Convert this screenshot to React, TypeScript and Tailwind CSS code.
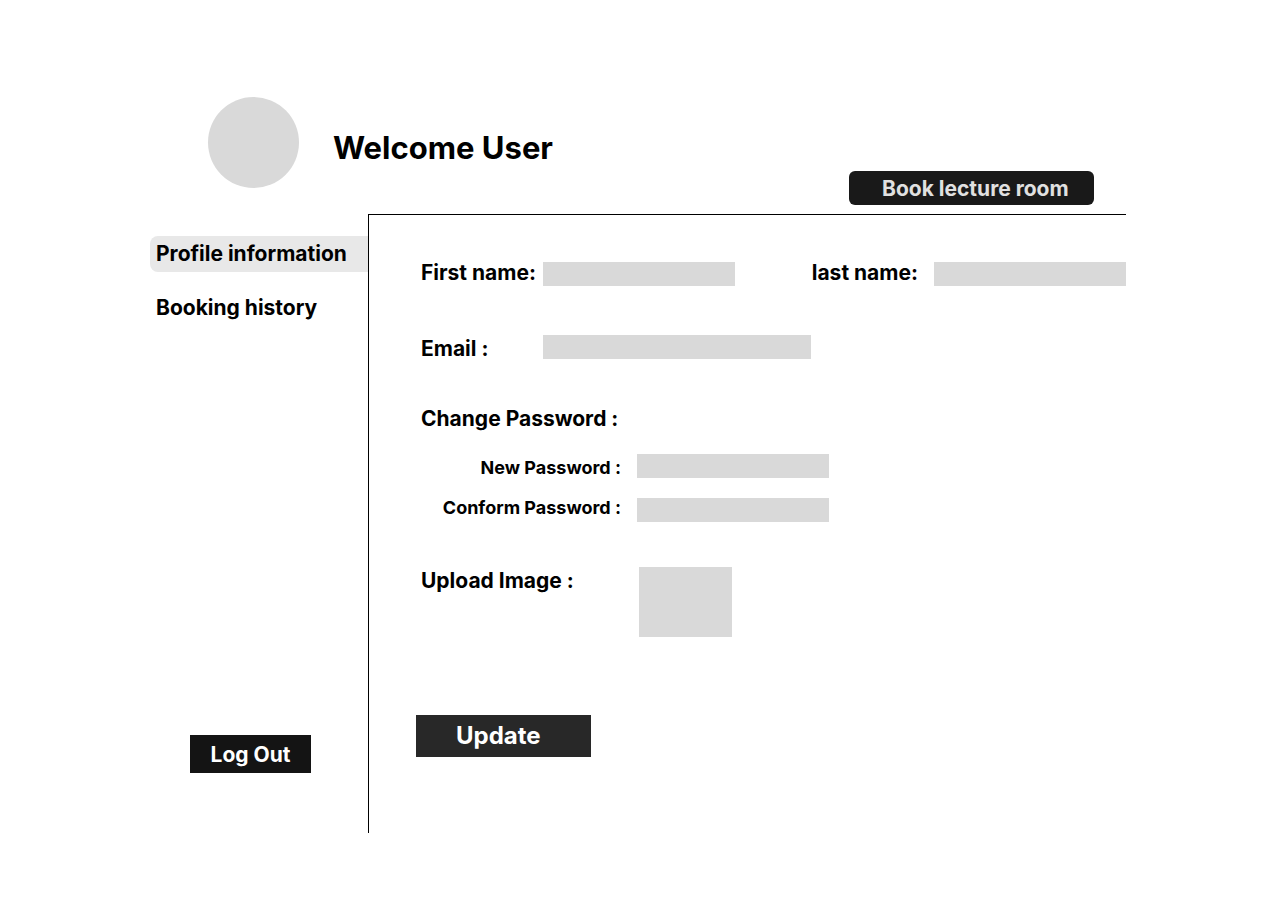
import React from "react";

const fieldClass = "h-6 w-[192px] bg-[#d9d9d9] px-2 text-sm outline-none";

function Header() {
  return (
    <header className="flex justify-between">
      <div className="flex items-center gap-[34px] pb-[26px] pl-[58px]">
        <div className="size-[91px] shrink-0 rounded-full bg-[#d9d9d9]" />
        <h1 className="pt-2.5 text-[31px] leading-10 font-bold">Welcome User</h1>
      </div>
      <button
        type="button"
        className="mr-8 mb-[9px] h-[34px] w-[245px] self-end rounded-md bg-[#191919] pt-0.5 pl-[33px] text-left text-[21px] leading-7 font-bold text-[#e0e0e0]"
      >
        Book lecture room
      </button>
    </header>
  );
}

function Sidebar() {
  return (
    <aside className="flex w-[218px] shrink-0 flex-col pt-[22px] pb-[60px]">
      <nav className="flex flex-col gap-[18px] text-[21px] leading-9 font-bold">
        <a href="#profile" aria-current="page" className="rounded-l-lg bg-[#e8e8e8] pl-1.5">
          Profile information
        </a>
        <a href="#bookings" className="rounded-l-lg pl-1.5">
          Booking history
        </a>
      </nav>
      <button
        type="button"
        className="mt-auto ml-10 h-[38px] w-[121px] bg-[#141414] pt-0.5 text-[21px] leading-7 font-bold text-white"
      >
        Log Out
      </button>
    </aside>
  );
}

function ProfileForm() {
  return (
    <form
      className="flex-1 border-t border-l border-black pt-[47px] pb-[76px] pl-[52px] text-[21px] leading-[22px] font-bold"
      onSubmit={(event) => event.preventDefault()}
    >
      <div className="flex items-start justify-between">
        <div className="flex items-start">
          <label htmlFor="first-name" className="w-[122px] whitespace-nowrap">
            First name:
          </label>
          <input id="first-name" type="text" className={fieldClass} />
        </div>
        <div className="flex items-start gap-4">
          <label htmlFor="last-name" className="whitespace-nowrap">
            last name:
          </label>
          <input id="last-name" type="text" className={fieldClass} />
        </div>
      </div>

      <div className="mt-[49px] flex items-end">
        <label htmlFor="email" className="w-[122px] leading-5">
          Email :
        </label>
        <input
          id="email"
          type="email"
          className="h-6 w-[268px] bg-[#d9d9d9] px-2 text-sm outline-none"
        />
      </div>

      <fieldset className="mt-[46px]">
        <legend className="leading-7">Change Password :</legend>
        <div className="mt-[21px] flex items-end gap-4">
          <label htmlFor="new-password" className="w-[200px] text-right text-lg leading-5">
            New Password :
          </label>
          <input id="new-password" type="password" className={fieldClass} />
        </div>
        <div className="mt-5 flex items-start gap-4">
          <label htmlFor="confirm-password" className="w-[200px] text-right text-lg leading-5">
            Conform Password :
          </label>
          <input id="confirm-password" type="password" className={fieldClass} />
        </div>
      </fieldset>

      <div className="mt-[45px] flex items-start">
        <label htmlFor="image" className="w-[218px] leading-7">
          Upload Image :
        </label>
        <div className="h-[70px] w-[93px] bg-[#d9d9d9]">
          <input id="image" type="file" className="size-full cursor-pointer opacity-0" />
        </div>
      </div>

      <button
        type="submit"
        className="mt-[78px] -ml-[5px] block h-[42px] w-[175px] bg-[#282828] pl-10 text-left text-2xl font-bold text-white"
      >
        Update
      </button>
    </form>
  );
}

export default function App() {
  return (
    <div className="min-h-screen bg-white pt-[97px] pr-[154px] pb-[77px] pl-[150px] font-['Inter',sans-serif] text-black">
      <Header />
      <div className="flex">
        <Sidebar />
        <ProfileForm />
      </div>
    </div>
  );
}
